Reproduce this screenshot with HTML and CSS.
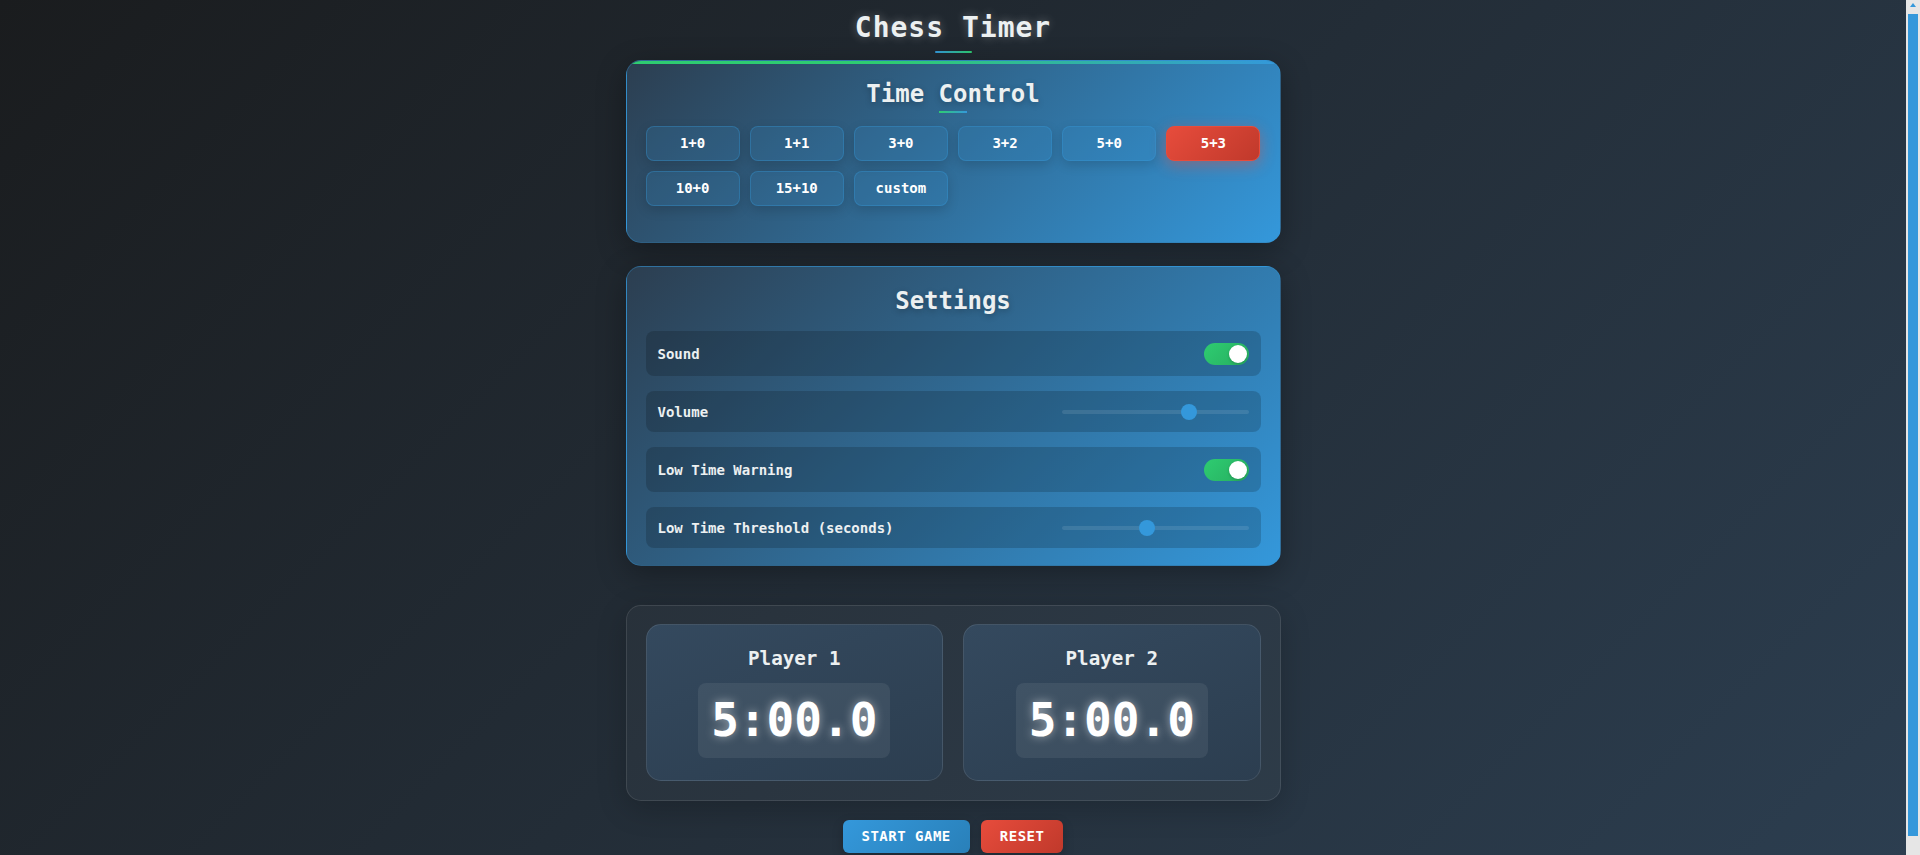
FILE: index.html
```html
<!DOCTYPE html>
<html lang="en">
<head>
<meta charset="utf-8">
<title>Chess Timer</title>
<link rel="stylesheet" href="styles.css">
</head>
<body>
<div class="app">
  <h1 class="app-title">Chess Timer</h1>

  <section class="panel panel-time">
    <h2 class="panel-title panel-title-underlined">Time Control</h2>
    <div class="preset-grid">
      <button class="preset">1+0</button>
      <button class="preset">1+1</button>
      <button class="preset">3+0</button>
      <button class="preset">3+2</button>
      <button class="preset">5+0</button>
      <button class="preset preset-active">5+3</button>
      <button class="preset">10+0</button>
      <button class="preset">15+10</button>
      <button class="preset">custom</button>
    </div>
  </section>

  <section class="panel panel-settings">
    <h2 class="panel-title">Settings</h2>
    <div class="setting-row">
      <span class="setting-label">Sound</span>
      <label class="toggle"><input type="checkbox" checked><span class="toggle-track"></span></label>
    </div>
    <div class="setting-row">
      <span class="setting-label">Volume</span>
      <input class="range" type="range" min="0" max="100" value="70">
    </div>
    <div class="setting-row">
      <span class="setting-label">Low Time Warning</span>
      <label class="toggle"><input type="checkbox" checked><span class="toggle-track"></span></label>
    </div>
    <div class="setting-row">
      <span class="setting-label">Low Time Threshold (seconds)</span>
      <input class="range" type="range" min="5" max="60" value="30">
    </div>
  </section>

  <section class="board">
    <div class="player-grid">
      <div class="player-card">
        <h3 class="player-name">Player 1</h3>
        <div class="clock">5:00.0</div>
      </div>
      <div class="player-card">
        <h3 class="player-name">Player 2</h3>
        <div class="clock">5:00.0</div>
      </div>
    </div>
  </section>

  <div class="controls">
    <button class="btn btn-start">START GAME</button>
    <button class="btn btn-reset">RESET</button>
  </div>
</div>

<div class="scrollbar" aria-hidden="true">
  <span class="scrollbar-arrow"></span>
  <span class="scrollbar-thumb"></span>
</div>
</body>
</html>
```

FILE: styles.css
```css
* {
  box-sizing: border-box;
}

html {
  overflow: hidden;
}

body {
  margin: 0;
  padding-right: 14px;
  min-height: 100vh;
  background: linear-gradient(135deg, #1a1c1e 0%, #2c3e50 100%);
  color: #ecf0f1;
  font-family: "DejaVu Sans Mono", "Liberation Mono", monospace;
}

.app {
  width: 655px;
  margin: 0 auto;
  padding: 11px 0 2px;
}

.app-title {
  position: relative;
  margin: 0 0 7px;
  padding-bottom: 9px;
  font-size: 28px;
  line-height: 33px;
  font-weight: 700;
  letter-spacing: 1px;
  text-align: center;
  color: #ecf0f1;
  text-shadow: 0 0 10px rgba(255, 255, 255, 0.3);
}

.app-title::after {
  content: "";
  position: absolute;
  left: 50%;
  bottom: 0;
  width: 37px;
  height: 2px;
  margin-left: -18px;
  background: linear-gradient(90deg, #3498db, #2ecc71);
  border-radius: 1px;
}

.panel {
  position: relative;
  overflow: hidden;
  border: 1px solid rgba(52, 152, 219, 0.35);
  border-radius: 15px;
  background: linear-gradient(135deg, #2c3e50 0%, #3498db 100%);
  box-shadow: 0 8px 30px rgba(0, 0, 0, 0.3);
}

.panel-time {
  padding: 19px 19px 19px;
  margin-bottom: 23px;
}

.panel-time::before {
  content: "";
  position: absolute;
  top: 0;
  left: 0;
  right: 0;
  height: 3px;
  background: linear-gradient(90deg, #2ecc71, #2ecc71 40%, #3498db);
}

.panel-settings {
  padding: 20px 19px 17px;
  margin-bottom: 39px;
}

.panel-title {
  position: relative;
  margin: 0 0 16px;
  font-size: 24px;
  line-height: 28px;
  font-weight: 700;
  text-align: center;
  color: #ecf0f1;
  text-shadow: 0 2px 6px rgba(0, 0, 0, 0.25);
}

.panel-title-underlined {
  padding-bottom: 5px;
  margin-bottom: 13px;
}

.panel-title-underlined::after {
  content: "";
  position: absolute;
  left: 50%;
  bottom: 0;
  width: 28px;
  height: 2px;
  margin-left: -14px;
  background: linear-gradient(90deg, #2ecc71, #3498db);
}

.preset-grid {
  display: grid;
  grid-template-columns: repeat(6, 1fr);
  gap: 10px;
  margin-bottom: 17px;
}

.preset {
  padding: 8px 4px;
  font-family: inherit;
  font-size: 14px;
  line-height: 17px;
  font-weight: 700;
  color: #ffffff;
  background: rgba(52, 152, 219, 0.15);
  border: 1px solid rgba(52, 152, 219, 0.35);
  border-radius: 8px;
  box-shadow: 0 4px 12px rgba(0, 0, 0, 0.15);
}

.preset-active {
  background: linear-gradient(135deg, #e74c3c, #c0392b);
  border-color: #e74c3c;
  box-shadow: 0 4px 15px rgba(231, 76, 60, 0.45);
}

.setting-row {
  display: flex;
  align-items: center;
  justify-content: space-between;
  padding: 11.5px 12px;
  background: rgba(0, 0, 0, 0.17);
  border-radius: 8px;
}

.setting-row + .setting-row {
  margin-top: 15px;
}

.setting-label {
  font-size: 14px;
  line-height: 18px;
  font-weight: 700;
  color: #ecf0f1;
}

.toggle {
  position: relative;
  display: block;
  width: 45px;
  height: 22px;
}

.toggle input {
  position: absolute;
  opacity: 0;
  width: 0;
  height: 0;
}

.toggle-track {
  position: absolute;
  inset: 0;
  border-radius: 11px;
  background: rgba(255, 255, 255, 0.2);
}

.toggle input:checked + .toggle-track {
  background: linear-gradient(135deg, #2ecc71, #27ae60);
}

.toggle-track::after {
  content: "";
  position: absolute;
  top: 2px;
  left: 2px;
  width: 18px;
  height: 18px;
  border-radius: 50%;
  background: #ffffff;
  box-shadow: 0 1px 3px rgba(0, 0, 0, 0.2);
}

.toggle input:checked + .toggle-track::after {
  left: 25px;
}

.range {
  -webkit-appearance: none;
  appearance: none;
  width: 187px;
  height: 16px;
  margin: 0;
  background: transparent;
}

.range::-webkit-slider-runnable-track {
  height: 4px;
  border-radius: 2px;
  background: rgba(255, 255, 255, 0.1);
}

.range::-webkit-slider-thumb {
  -webkit-appearance: none;
  appearance: none;
  width: 16px;
  height: 16px;
  margin-top: -6px;
  border-radius: 50%;
  background: #3498db;
  border: none;
}

.board {
  padding: 18px 19px 19px;
  border: 1px solid rgba(255, 255, 255, 0.1);
  border-radius: 15px;
  background: rgba(255, 255, 255, 0.03);
  box-shadow: 0 8px 30px rgba(0, 0, 0, 0.2);
}

.player-grid {
  display: grid;
  grid-template-columns: 1fr 1fr;
  gap: 20px;
}

.player-card {
  padding: 23px 20px 22px;
  text-align: center;
  border: 1px solid rgba(255, 255, 255, 0.1);
  border-radius: 15px;
  background: linear-gradient(160deg, #34495e 0%, #2c3e50 100%);
}

.player-name {
  margin: 0 0 13px;
  font-size: 19.2px;
  line-height: 22px;
  font-weight: 700;
  color: #ecf0f1;
}

.clock {
  display: inline-block;
  padding: 10px 13px;
  font-size: 46px;
  line-height: 55px;
  font-weight: 700;
  color: #ffffff;
  background: rgba(255, 255, 255, 0.07);
  border-radius: 8px;
  text-shadow: 0 0 10px rgba(255, 255, 255, 0.5);
}

.controls {
  display: flex;
  justify-content: center;
  gap: 11px;
  margin-top: 19px;
}

.btn {
  padding: 8px 19px;
  font-family: inherit;
  font-size: 14px;
  line-height: 17px;
  font-weight: 700;
  letter-spacing: 0.5px;
  color: #ffffff;
  border: none;
  border-radius: 6px;
  box-shadow: 0 4px 12px rgba(0, 0, 0, 0.2);
}

.btn-start {
  background: linear-gradient(135deg, #3498db, #2980b9);
}

.btn-reset {
  background: linear-gradient(135deg, #e74c3c, #c0392b);
}

/* browser scrollbar, drawn over the page edge */
.scrollbar {
  position: fixed;
  top: 0;
  right: 0;
  bottom: 0;
  width: 14px;
  background: #e6e6e6;
}

.scrollbar-arrow {
  position: absolute;
  top: 3px;
  left: 4px;
  width: 0;
  height: 0;
  border-left: 3px solid transparent;
  border-right: 3px solid transparent;
  border-bottom: 4px solid #3498db;
}

.scrollbar-thumb {
  position: absolute;
  top: 14px;
  left: 2px;
  width: 10px;
  height: 822px;
  background: #3498db;
}
```
